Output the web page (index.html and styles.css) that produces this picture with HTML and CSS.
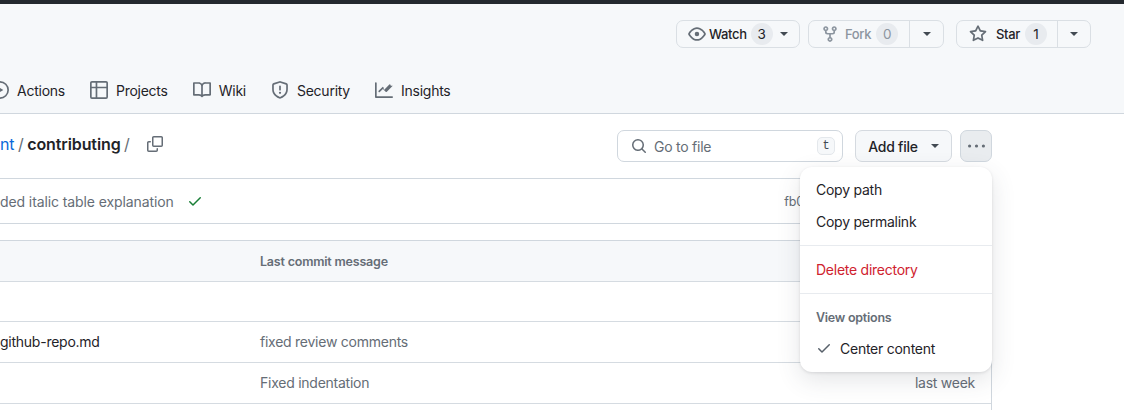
FILE: index.html
```html
<!DOCTYPE html>
<html>
<head>
    <meta charset="UTF-8">
    <title>contributing</title>
    <link rel="stylesheet" href="styles.css">
</head>
<body>
    <svg class="defs" width="0" height="0">
        <symbol id="i-eye" viewBox="0 0 16 16"><path d="M8 2c1.981 0 3.671.992 4.933 2.078 1.27 1.091 2.187 2.345 2.637 3.023a1.62 1.62 0 0 1 0 1.798c-.45.678-1.367 1.932-2.637 3.023C11.67 13.008 9.981 14 8 14c-1.981 0-3.671-.992-4.933-2.078C1.797 10.83.88 9.576.43 8.898a1.62 1.62 0 0 1 0-1.798c.45-.677 1.367-1.931 2.637-3.022C4.33 2.992 6.019 2 8 2ZM1.679 7.932a.12.12 0 0 0 0 .136c.411.622 1.241 1.75 2.366 2.717C5.176 11.758 6.527 12.5 8 12.5c1.473 0 2.825-.742 3.955-1.715 1.124-.967 1.954-2.096 2.366-2.717a.12.12 0 0 0 0-.136c-.412-.621-1.242-1.75-2.366-2.717C10.824 4.242 9.473 3.5 8 3.5c-1.473 0-2.825.742-3.955 1.715-1.124.967-1.954 2.096-2.366 2.717ZM8 10a2 2 0 1 1-.001-3.999A2 2 0 0 1 8 10Z"/></symbol>
        <symbol id="i-fork" viewBox="0 0 16 16"><path d="M5 5.372v.878c0 .414.336.75.75.75h4.5a.75.75 0 0 0 .75-.75v-.878a2.25 2.25 0 1 1 1.5 0v.878a2.25 2.25 0 0 1-2.25 2.25h-1.5v2.128a2.251 2.251 0 1 1-1.5 0V8.5h-1.5A2.25 2.25 0 0 1 3.5 6.25v-.878a2.25 2.25 0 1 1 1.5 0ZM5 3.25a.75.75 0 1 0-1.5 0 .75.75 0 0 0 1.5 0Zm6.75.75a.75.75 0 1 0 0-1.5.75.75 0 0 0 0 1.5Zm-3 8.75a.75.75 0 1 0-1.5 0 .75.75 0 0 0 1.5 0Z"/></symbol>
        <symbol id="i-star" viewBox="0 0 16 16"><path d="M8 .25a.75.75 0 0 1 .673.418l1.882 3.815 4.21.612a.75.75 0 0 1 .416 1.279l-3.046 2.97.719 4.192a.751.751 0 0 1-1.088.791L8 12.347l-3.766 1.98a.75.75 0 0 1-1.088-.79l.72-4.194L.818 6.374a.75.75 0 0 1 .416-1.28l4.21-.611L7.327.668A.75.75 0 0 1 8 .25Zm0 2.445L6.615 5.5a.75.75 0 0 1-.564.41l-3.097.45 2.24 2.184a.75.75 0 0 1 .216.664l-.528 3.084 2.769-1.456a.75.75 0 0 1 .698 0l2.77 1.456-.53-3.084a.75.75 0 0 1 .216-.664l2.24-2.183-3.096-.45a.75.75 0 0 1-.564-.41L8 2.694Z"/></symbol>
        <symbol id="i-play" viewBox="0 0 16 16"><path d="M8 0a8 8 0 1 1 0 16A8 8 0 0 1 8 0ZM1.5 8a6.5 6.5 0 1 0 13 0 6.5 6.5 0 0 0-13 0Zm4.879-2.773 4.264 2.559a.25.25 0 0 1 0 .428l-4.264 2.559A.25.25 0 0 1 6 10.559V5.442a.25.25 0 0 1 .379-.215Z"/></symbol>
        <symbol id="i-table" viewBox="0 0 16 16"><path d="M0 1.75C0 .784.784 0 1.75 0h12.5C15.216 0 16 .784 16 1.75v12.5A1.75 1.75 0 0 1 14.25 16H1.75A1.75 1.75 0 0 1 0 14.25ZM6.5 6.5v8h7.75a.25.25 0 0 0 .25-.25V6.5Zm8-1.5V1.75a.25.25 0 0 0-.25-.25H6.5V5Zm-13 1.5v7.75c0 .138.112.25.25.25H5v-8ZM5 5V1.5H1.75a.25.25 0 0 0-.25.25V5Z"/></symbol>
        <symbol id="i-book" viewBox="0 0 16 16"><path d="M0 1.75A.75.75 0 0 1 .75 1h4.253c1.227 0 2.317.59 3 1.501A3.743 3.743 0 0 1 11.006 1h4.245a.75.75 0 0 1 .75.75v10.5a.75.75 0 0 1-.75.75h-4.507a2.25 2.25 0 0 0-1.591.659l-.622.621a.75.75 0 0 1-1.06 0l-.622-.621A2.25 2.25 0 0 0 5.258 13H.75a.75.75 0 0 1-.75-.75Zm7.251 10.324.004-5.073-.002-2.253A2.25 2.25 0 0 0 5.003 2.5H1.5v9h3.757a3.75 3.75 0 0 1 1.994.574ZM8.755 4.75l-.004 7.322a3.752 3.752 0 0 1 1.992-.572H14.5v-9h-3.495a2.25 2.25 0 0 0-2.25 2.25Z"/></symbol>
        <symbol id="i-shield" viewBox="0 0 16 16"><path d="M7.467.133a1.748 1.748 0 0 1 1.066 0l5.25 1.68A1.75 1.75 0 0 1 15 3.48V7c0 1.566-.32 3.182-1.303 4.682-.983 1.498-2.585 2.813-5.032 3.855a1.697 1.697 0 0 1-1.33 0c-2.447-1.042-4.049-2.357-5.032-3.855C1.32 10.182 1 8.566 1 7V3.48a1.75 1.75 0 0 1 1.217-1.667Zm.61 1.429a.25.25 0 0 0-.153 0l-5.25 1.68a.25.25 0 0 0-.174.238V7c0 1.358.275 2.666 1.057 3.86.784 1.194 2.121 2.34 4.366 3.297a.196.196 0 0 0 .154 0c2.245-.956 3.582-2.104 4.366-3.298C13.225 9.666 13.5 8.36 13.5 7V3.48a.251.251 0 0 0-.174-.237l-5.25-1.68ZM8.75 4.75v3a.75.75 0 0 1-1.5 0v-3a.75.75 0 0 1 1.5 0ZM9 10.5a1 1 0 1 1-2 0 1 1 0 0 1 2 0Z"/></symbol>
        <symbol id="i-graph" viewBox="0 0 16 16"><path d="M1.5 1.75V13.5h13.75a.75.75 0 0 1 0 1.5H.75a.75.75 0 0 1-.75-.75V1.75a.75.75 0 0 1 1.5 0Zm14.28 2.53-5.25 5.25a.75.75 0 0 1-1.06 0L7 7.06 4.28 9.78a.751.751 0 0 1-1.042-.018.751.751 0 0 1-.018-1.042l3.25-3.25a.75.75 0 0 1 1.06 0L8 7.94l4.72-4.72a.751.751 0 0 1 1.042.018.751.751 0 0 1 .018 1.042Z"/></symbol>
        <symbol id="i-copy" viewBox="0 0 16 16"><path d="M0 6.75C0 5.784.784 5 1.75 5h1.5a.75.75 0 0 1 0 1.5h-1.5a.25.25 0 0 0-.25.25v7.5c0 .138.112.25.25.25h7.5a.25.25 0 0 0 .25-.25v-1.5a.75.75 0 0 1 1.5 0v1.5A1.75 1.75 0 0 1 9.25 16h-7.5A1.75 1.75 0 0 1 0 14.25Z"/><path d="M5 1.75C5 .784 5.784 0 6.75 0h7.5C15.216 0 16 .784 16 1.75v7.5A1.75 1.75 0 0 1 14.25 11h-7.5A1.75 1.75 0 0 1 5 9.25Zm1.75-.25a.25.25 0 0 0-.25.25v7.5c0 .138.112.25.25.25h7.5a.25.25 0 0 0 .25-.25v-7.5a.25.25 0 0 0-.25-.25Z"/></symbol>
        <symbol id="i-search" viewBox="0 0 16 16"><path d="M10.68 11.74a6 6 0 0 1-7.922-8.982 6 6 0 0 1 8.982 7.922l3.04 3.04a.749.749 0 0 1-.326 1.275.749.749 0 0 1-.734-.215ZM11.5 7a4.499 4.499 0 1 0-8.997 0A4.499 4.499 0 0 0 11.5 7Z"/></symbol>
        <symbol id="i-check" viewBox="0 0 16 16"><path d="M13.78 4.22a.75.75 0 0 1 0 1.06l-7.25 7.25a.75.75 0 0 1-1.06 0L2.22 9.28a.751.751 0 0 1 .018-1.042.751.751 0 0 1 1.042-.018L6 10.94l6.72-6.72a.75.75 0 0 1 1.06 0Z"/></symbol>
        <symbol id="i-kebab" viewBox="0 0 16 16"><path d="M8 9a1.5 1.5 0 1 0 0-3 1.5 1.5 0 0 0 0 3ZM1.5 9a1.5 1.5 0 1 0 0-3 1.5 1.5 0 0 0 0 3Zm13 0a1.5 1.5 0 1 0 0-3 1.5 1.5 0 0 0 0 3Z"/></symbol>
    </svg>

    <div class="topbar"></div>

    <header class="repo-head">
        <div class="actions">
            <div class="btn-group watch">
                <a class="btn">
                    <svg class="icon"><use href="#i-eye"/></svg>
                    <span class="btn-label">Watch</span>
                    <span class="counter">3</span>
                    <span class="caret"></span>
                </a>
            </div>
            <div class="btn-group fork is-disabled">
                <a class="btn btn-main">
                    <svg class="icon"><use href="#i-fork"/></svg>
                    <span class="btn-label">Fork</span>
                    <span class="counter">0</span>
                </a>
                <a class="btn btn-side"><span class="caret"></span></a>
            </div>
            <div class="btn-group star">
                <a class="btn btn-main">
                    <svg class="icon"><use href="#i-star"/></svg>
                    <span class="btn-label">Star</span>
                    <span class="counter">1</span>
                </a>
                <a class="btn btn-side"><span class="caret"></span></a>
            </div>
        </div>
        <nav class="tabs">
            <a class="tab"><svg class="icon"><use href="#i-play"/></svg>Actions</a>
            <a class="tab"><svg class="icon"><use href="#i-table"/></svg>Projects</a>
            <a class="tab"><svg class="icon"><use href="#i-book"/></svg>Wiki</a>
            <a class="tab"><svg class="icon"><use href="#i-shield"/></svg>Security</a>
            <a class="tab"><svg class="icon"><use href="#i-graph"/></svg>Insights</a>
        </nav>
    </header>

    <main class="main">
        <div class="path-row">
            <div class="crumbs">
                <a class="crumb-link">nt</a>
                <span class="sep">/</span>
                <strong>contributing</strong>
                <span class="sep">/</span>
                <svg class="icon copy"><use href="#i-copy"/></svg>
            </div>
            <div class="path-tools">
                <div class="goto">
                    <svg class="icon"><use href="#i-search"/></svg>
                    <span class="goto-text">Go to file</span>
                    <kbd class="hotkey">t</kbd>
                </div>
                <a class="btn add-file">Add file <span class="caret"></span></a>
                <a class="btn more"><svg class="icon"><use href="#i-kebab"/></svg></a>
            </div>
        </div>

        <div class="commit-row">
            <span>ded italic table explanation</span>
            <svg class="icon ok"><use href="#i-check"/></svg>
            <span class="sha">fb0</span>
        </div>

        <div class="files">
            <div class="file-row file-head"><span></span><span>Last commit message</span><span></span></div>
            <div class="file-row file-short"><span></span><span></span><span></span></div>
            <div class="file-row"><span class="file-name">github-repo.md</span><span>fixed review comments</span><span></span></div>
            <div class="file-row"><span></span><span>Fixed indentation</span><span class="when">last week</span></div>
            <div class="file-row"><span></span><span></span><span></span></div>
        </div>

        <div class="menu">
            <div class="menu-part">
                <a class="menu-item">Copy path</a>
                <a class="menu-item">Copy permalink</a>
            </div>
            <div class="menu-part">
                <a class="menu-item danger">Delete directory</a>
            </div>
            <div class="menu-part">
                <div class="menu-title">View options</div>
                <a class="menu-item checked"><svg class="icon"><use href="#i-check"/></svg>Center content</a>
            </div>
        </div>
    </main>
</body>
</html>
```

FILE: styles.css
```css
* {
    box-sizing: border-box;
}
html, body {
    height: 410px;
    overflow: hidden;
}
body {
    margin: 0;
    background-color: #ffffff;
    color: #1f2328;
    font-family: Inter, "Liberation Sans", sans-serif;
    font-size: 14px;
    letter-spacing: -0.25px;
}
.defs {
    display: block;
    height: 0;
}
.icon {
    display: block;
    flex: none;
    width: 18px;
    height: 18px;
    fill: #656d76;
}
.caret {
    display: inline-block;
    width: 0;
    height: 0;
    border-style: solid;
    border-width: 4.5px 4.5px 0;
    border-color: #424a53 transparent transparent;
}

.topbar {
    height: 4px;
    background-color: #24292f;
}
.repo-head {
    height: 110px;
    padding-top: 16px;
    background-color: #f6f8fa;
    border-bottom: 1px solid #d0d7de;
}

.actions {
    display: flex;
    justify-content: flex-end;
    padding-right: 33px;
    height: 28px;
}
.btn-group {
    display: flex;
    height: 28px;
    background-color: #f6f8fa;
    border: 1px solid #dadfe4;
    border-radius: 7px;
}
.btn {
    display: flex;
    align-items: center;
    font-weight: 500;
    font-size: 13px;
    letter-spacing: -0.35px;
}
.btn-label {
    margin-left: 4px;
}
.counter {
    display: flex;
    align-items: center;
    justify-content: center;
    width: 22px;
    height: 22px;
    margin-left: 5px;
    border-radius: 11px;
    background-color: #e8ebef;
    font-size: 13.5px;
    font-weight: 400;
}
.watch {
    width: 124px;
    margin-right: 8px;
}
.watch .btn {
    padding-left: 12px;
}
.watch .icon {
    margin-left: -1px;
}
.watch .btn-label {
    margin-left: 3px;
}
.watch .counter {
    margin-left: 4px;
}
.watch .caret {
    margin-left: 7px;
}
.fork {
    width: 136px;
    margin-right: 12px;
}
.star {
    width: 135px;
}
.btn-main {
    padding-left: 12px;
    border-right: 1px solid #dadfe4;
}
.fork .btn-main {
    width: 101px;
}
.star .btn-main {
    width: 101px;
}
.fork .btn-label {
    margin-left: 6px;
}
.star .btn-label {
    margin-left: 9px;
}
.star .counter {
    margin-left: 5px;
}
.btn-side {
    flex: 1;
    justify-content: center;
}
.is-disabled .btn-label,
.is-disabled .counter {
    color: #8c959f;
}
.is-disabled .icon {
    fill: #8c959f;
}

.tabs {
    display: flex;
    margin-top: 30px;
    margin-left: -9px;
}
.tab {
    display: flex;
    align-items: center;
    gap: 8px;
    height: 24px;
    margin-right: 25px;
}

.main {
    position: relative;
    height: 296px;
    overflow: hidden;
    padding-right: 132px;
}
.path-row {
    display: flex;
    justify-content: space-between;
    align-items: center;
    height: 64px;
}
.crumbs {
    display: flex;
    align-items: center;
    font-size: 16px;
    letter-spacing: -0.1px;
    margin-top: -4px;
}
.crumb-link {
    color: #0969da;
}
.sep {
    margin: 0 3.5px;
    color: #656d76;
    font-weight: 400;
}
.crumbs strong {
    font-weight: 600;
}
.copy {
    width: 16px;
    height: 16px;
    margin-left: 14px;
}
.path-tools {
    display: flex;
    align-items: center;
}
.goto {
    display: flex;
    align-items: center;
    width: 226px;
    height: 32px;
    padding: 0 7px 0 13px;
    background-color: #ffffff;
    border: 1px solid #d0d7de;
    border-radius: 7px;
    color: #656d76;
}
.goto .icon {
    width: 16px;
    height: 16px;
}
.goto-text {
    flex: 1;
    margin-left: 7px;
}
.hotkey {
    display: flex;
    align-items: center;
    justify-content: center;
    width: 18px;
    height: 18px;
    background-color: #f6f8fa;
    border: 1px solid #e4e8ec;
    border-radius: 5px;
    color: #424a53;
    font-family: "Liberation Mono", monospace;
    font-size: 12px;
}
.add-file {
    justify-content: center;
    gap: 13px;
    width: 97px;
    height: 32px;
    margin-left: 12px;
    background-color: #f6f8fa;
    border: 1px solid #d5dae0;
    border-radius: 7px;
    font-size: 14px;
    letter-spacing: -0.25px;
}
.more {
    justify-content: center;
    width: 32px;
    height: 32px;
    margin-left: 8px;
    background-color: #e9ecef;
    border: 1px solid #d0d7de;
    border-radius: 7px;
}
.more .icon {
    width: 17px;
    height: 17px;
}

.commit-row {
    display: flex;
    align-items: center;
    height: 46px;
    border-top: 1px solid #d0d7de;
    border-bottom: 1px solid #d0d7de;
    color: #656d76;
    letter-spacing: -0.1px;
}
.ok {
    margin-left: 13px;
    fill: #1a7f37;
    width: 16px;
    height: 16px;
}
.sha {
    margin-left: auto;
    padding-right: 188px;
    font-size: 12.5px;
}

.files {
    margin-top: 16px;
    border-top: 1px solid #d0d7de;
    border-right: 1px solid #d0d7de;
}
.file-row {
    display: grid;
    grid-template-columns: 260px 1fr auto;
    align-items: center;
    height: 41px;
    padding-right: 16px;
    padding-bottom: 2px;
    border-bottom: 1px solid #d5dbe1;
    color: #656d76;
}
.file-short {
    height: 40px;
}
.file-head {
    padding-bottom: 0;
    background-color: #f6f8fa;
    font-size: 12.5px;
    font-weight: 600;
    letter-spacing: -0.2px;
}
.file-name {
    color: #1f2328;
}

.menu {
    position: absolute;
    top: 53px;
    right: 132px;
    width: 192px;
    height: 205px;
    background-color: #ffffff;
    border-radius: 12px;
    box-shadow: 0 1px 3px rgba(31, 35, 40, 0.12), 0 8px 24px rgba(66, 74, 83, 0.14);
}
.menu-part {
    padding: 7px 0 8px;
    border-bottom: 1px solid #e8ebef;
}
.menu-part:first-child {
    padding-top: 6px;
}
.menu-part:last-child {
    border-bottom: 0;
}
.menu-item {
    display: flex;
    align-items: center;
    height: 32px;
    padding-left: 16px;
}
.danger {
    color: #cf222e;
}
.menu-title {
    height: 31px;
    padding: 9px 16px 0;
    line-height: 15px;
    color: #656d76;
    font-size: 12.5px;
    font-weight: 600;
}
.checked .icon {
    width: 16px;
    height: 16px;
    margin-right: 8px;
    fill: #57606a;
}
```
